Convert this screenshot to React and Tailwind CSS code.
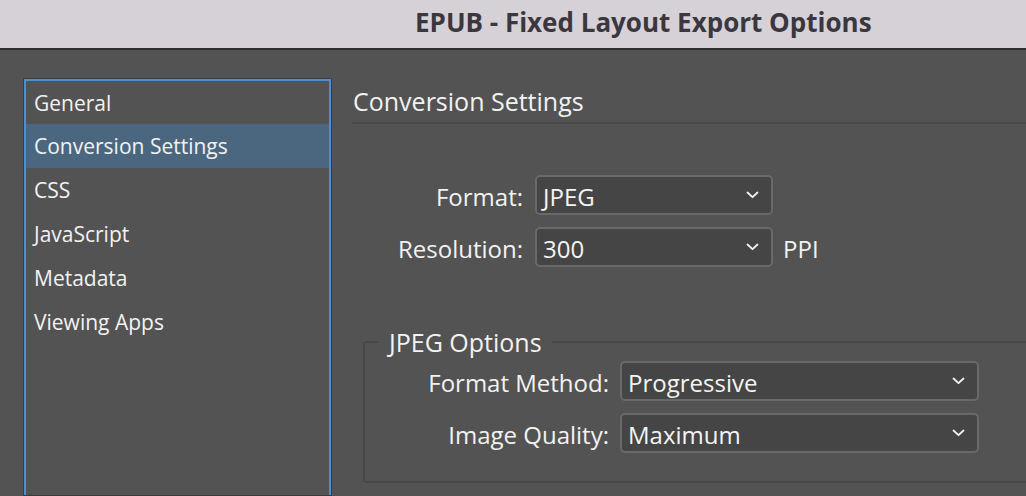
import React from "react";

const Chevron = () => (
  <svg width="13" height="8" viewBox="0 0 13 8" fill="none" className="shrink-0">
    <path d="M1.5 1.5 L6.5 6.2 L11.5 1.5" stroke="#f2f2f2" strokeWidth="1.8" strokeLinecap="round" strokeLinejoin="round" />
  </svg>
);

const Select = ({ value, w }) => (
  <div className={`${w} h-[40px] flex items-center justify-between pl-[6px] pr-[12px] bg-[#454545] border-2 border-[#696969] rounded-[5px] text-[24px] text-[#f4f4f4]`}>
    <span className="leading-none pt-[3px]">{value}</span>
    <Chevron />
  </div>
);

const Label = ({ children, w }) => (
  <div className={`${w} text-right text-[24px] text-[#f2f2f2] leading-none pt-[3px]`}>{children}</div>
);

export default function App() {
  const items = ["General", "Conversion Settings", "CSS", "JavaScript", "Metadata", "Viewing Apps"];
  return (
    <div className="w-[1026px] h-[496px] overflow-hidden bg-[#535353] flex flex-col" style={{ fontFamily: '"Open Sans", "Noto Sans", sans-serif' }}>
      <div className="h-[50px] shrink-0 bg-[#d6d1d7] border-b-2 border-[#2e2e2e] flex items-center pl-[415px] pb-[4px]">
        <span className="text-[26px] font-bold text-[#3a383e]">EPUB - Fixed Layout Export Options</span>
      </div>
      <div className="flex flex-1 pt-[28px]">
        <div className="ml-[23px] w-[309px] shrink-0 border border-[#3c3c3c] flex">
          <div className="flex-1 border-2 border-b-0 border-[#4a8fd8] flex flex-col">
            {items.map((t, i) => (
              <div
                key={t}
                className={`${i === 0 ? "h-[43px]" : "h-[44px]"} flex items-center pl-[8px] pt-[2px] text-[21px] font-medium text-[#f2f2f2] ${i === 1 ? "bg-[#4b6780]" : ""}`}
              >
                {t}
              </div>
            ))}
          </div>
        </div>
        <div className="flex-1 ml-[20px] flex flex-col">
          <div className="h-[46px] flex items-center pl-[1px] pt-[3px] text-[25px] font-medium text-[#f2f2f2] border-b-2 border-[#484848]">
            Conversion Settings
          </div>
          <div className="flex flex-col gap-[12px] mt-[51px] font-medium">
            <div className="flex items-center">
              <Label w="w-[171px]">Format:</Label>
              <div className="ml-[12px]"><Select value="JPEG" w="w-[238px]" /></div>
            </div>
            <div className="flex items-center">
              <Label w="w-[171px]">Resolution:</Label>
              <div className="ml-[12px]"><Select value="300" w="w-[238px]" /></div>
              <span className="ml-[10px] text-[24px] text-[#f2f2f2] leading-none pt-[3px]">PPI</span>
            </div>
          </div>
          <div className="relative ml-[11px] mt-[74px] mr-[-20px] h-[142px] border-2 border-[#474747] rounded-[3px] font-medium">
            <span className="absolute left-[14px] top-[-16px] px-[10px] bg-[#535353] text-[25px] text-[#f2f2f2] leading-[30px]">JPEG Options</span>
            <div className="flex flex-col gap-[12px] pt-[18px]">
              <div className="flex items-center">
                <Label w="w-[244px]">Format Method:</Label>
                <div className="ml-[11px]"><Select value="Progressive" w="w-[359px]" /></div>
              </div>
              <div className="flex items-center">
                <Label w="w-[244px]">Image Quality:</Label>
                <div className="ml-[11px]"><Select value="Maximum" w="w-[359px]" /></div>
              </div>
            </div>
          </div>
        </div>
      </div>
    </div>
  );
}
